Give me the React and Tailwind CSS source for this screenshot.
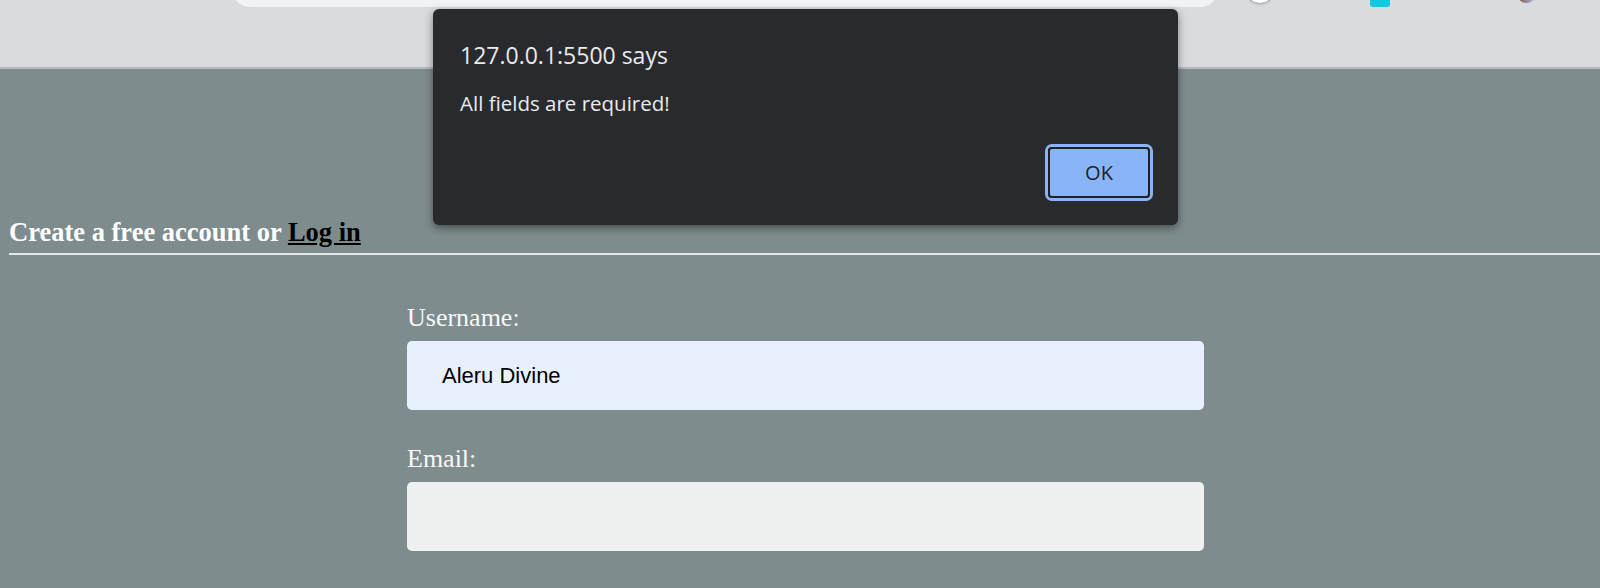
import React from 'react';

// Browser toolbar strip (only the bottom edge is visible in the shot)
function Toolbar() {
  return (
    <div className="h-[69px] bg-[#dadbdf] border-b-2 border-[#b6b9bd] flex items-start overflow-hidden">
      <div className="ml-[232px] -mt-[29px] h-[36px] w-[986px] rounded-full bg-[#f1f3f4]" />
      <div className="ml-[27px] -mt-[28px] h-[32px] w-[30px] rounded-full bg-white border border-[#a8abb0] shadow" />
      <div className="ml-[95px] h-[7px] w-[20px] rounded-b-[3px] bg-[#0fc9de]" />
      <div className="ml-[128px] -mt-[13px] h-[16px] w-[17px] rounded-full bg-gradient-to-r from-[#7a5a4a] to-[#a9c1e6]" />
    </div>
  );
}

function AlertDialog() {
  return (
    <div className="absolute left-[433px] top-[9px] w-[745px] h-[216px] rounded-[6px] bg-[#292a2d] shadow-[0_3px_8px_rgba(0,0,0,0.45)] px-[27px] pt-[30px] flex flex-col font-['Open_Sans',sans-serif] text-[#e8eaed]">
      <div className="text-[23px] leading-[32px]">127.0.0.1:5500 says</div>
      <div className="mt-[19px] text-[20.5px] leading-[26px]">All fields are required!</div>
      <div className="flex justify-end mt-[28px] -mr-[2px]">
        <div className="rounded-[7px] border-[3px] border-[#8ab4f8]">
          <button className="w-[102px] h-[51px] rounded-[4px] border-2 border-[#202124] bg-[#8ab4f8] text-[#202124] text-[20px]">
            OK
          </button>
        </div>
      </div>
    </div>
  );
}

function Field({ label, value, bg }) {
  return (
    <div className="flex flex-col">
      <label className="pt-[2px] text-[26px] leading-[30px] text-[#f8f8f8]">{label}</label>
      <div className={`mt-[8px] h-[69px] rounded-[5px] flex items-center pl-[35px] font-['Liberation_Sans',Arial,sans-serif] text-[22px] text-black ${bg}`}>
        {value}
      </div>
    </div>
  );
}

export default function App() {
  return (
    <div className="relative w-[1600px] h-[588px] overflow-hidden bg-[#7f8c8d] font-['Liberation_Serif',serif]">
      <Toolbar />
      <div className="pl-[9px] pt-[149px]">
        <h2 className="text-[26.5px] leading-[28px] font-bold text-white">
          Create a free account or{' '}
          <span className="text-black underline">Log in</span>
        </h2>
        <div className="mt-[7px] h-[2px] bg-[#e6e6e6]" />
      </div>
      <div className="ml-[407px] w-[797px] mt-[46px] flex flex-col gap-[32px]">
        <Field label="Username:" value="Aleru Divine" bg="bg-[#e8f0fe]" />
        <Field label="Email:" value="" bg="bg-[#eff1f0]" />
      </div>
      <AlertDialog />
    </div>
  );
}
